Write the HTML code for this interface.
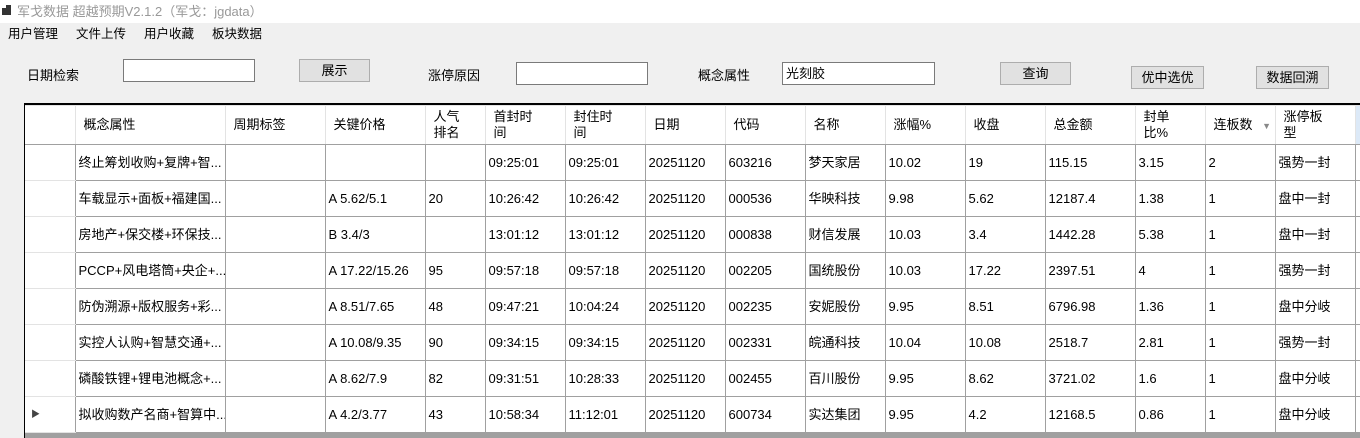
<!DOCTYPE html>
<html><head><meta charset="utf-8"><style>
*{margin:0;padding:0;box-sizing:border-box}
body{width:1360px;height:438px;overflow:hidden;background:#f0f0f0;font-family:"Liberation Sans","Noto Sans CJK SC",sans-serif;font-size:13px;color:#000;position:relative}
.abs{position:absolute}
.title{left:0;top:0;width:1360px;height:23px;background:#fff;color:#999;font-size:13px;line-height:23px;padding-left:17px}
.menu{top:23px;left:0;width:1360px;height:23px;line-height:23px;font-size:12.5px}
.menu span{position:absolute;top:0}
.inp{background:#fff;border:1px solid #7a7a7a;height:23px;line-height:21px;padding-left:3px}
.btn{background:#e1e1e1;border:1px solid #adadad;height:23px;line-height:21px;text-align:center}
.grid{left:24px;top:103px;width:1336px;height:335px;border-left:1px solid #000;border-top:2px solid #000;background:#fff;overflow:hidden}
table{border-collapse:collapse;table-layout:fixed;position:absolute;left:0;top:0;width:1350px}
td{border:1px solid #a0a0a0;height:36px;padding:0 3px;white-space:nowrap;overflow:hidden;vertical-align:middle;line-height:15px}
tr.h td{border-color:#e3e3e3;height:39px;border-bottom:1px solid #a0a0a0;padding-left:8px;line-height:16px}
td.rh{border-left:none;border-top-color:#e3e3e3;border-bottom-color:#e3e3e3;border-right-color:#a0a0a0}
.bot{left:25px;top:433px;width:1335px;height:5px;background:#a0a0a0}
</style></head><body>
<div class="abs title">军戈数据 超越预期V2.1.2（军戈：jgdata）</div>
<div class="abs" style="left:2px;top:8px;width:5px;height:7px;background:#333"></div>
<div class="abs" style="left:6px;top:5px;width:5px;height:10px;background:#333"></div>
<div class="abs menu"><span style="left:8px">用户管理</span><span style="left:76px">文件上传</span><span style="left:144px">用户收藏</span><span style="left:212px">板块数据</span></div>
<div class="abs" style="left:27px;top:65px">日期检索</div>
<div class="abs inp" style="left:123px;top:59px;width:132px"></div>
<div class="abs btn" style="left:299px;top:59px;width:71px">展示</div>
<div class="abs" style="left:428px;top:65px">涨停原因</div>
<div class="abs inp" style="left:516px;top:62px;width:132px"></div>
<div class="abs" style="left:698px;top:65px">概念属性</div>
<div class="abs inp" style="left:782px;top:62px;width:153px">光刻胶</div>
<div class="abs btn" style="left:1000px;top:62px;width:71px">查询</div>
<div class="abs btn" style="left:1131px;top:66px;width:73px">优中选优</div>
<div class="abs btn" style="left:1256px;top:66px;width:73px">数据回溯</div>
<div class="abs grid">
<table>
<colgroup><col style="width:50px"><col style="width:150px"><col style="width:100px"><col style="width:100px"><col style="width:60px"><col style="width:80px"><col style="width:80px"><col style="width:80px"><col style="width:80px"><col style="width:80px"><col style="width:80px"><col style="width:80px"><col style="width:90px"><col style="width:70px"><col style="width:70px"><col style="width:80px"><col style="width:20px"></colgroup>
<tr class="h"><td style="border-left:none"></td><td>概念属性</td><td>周期标签</td><td>关键价格</td><td>人气<br>排名</td><td>首封时<br>间</td><td>封住时<br>间</td><td>日期</td><td>代码</td><td>名称</td><td>涨幅%</td><td>收盘</td><td>总金额</td><td>封单<br>比%</td><td>连板数 <span style="color:#888;font-size:9px;margin-left:6px">▼</span></td><td>涨停板<br>型</td><td style="background:#dce9f7"></td></tr>
<tr><td class="rh"></td><td>终止筹划收购+复牌+智...</td><td></td><td></td><td></td><td>09:25:01</td><td>09:25:01</td><td>20251120</td><td>603216</td><td>梦天家居</td><td>10.02</td><td>19</td><td>115.15</td><td>3.15</td><td>2</td><td>强势一封</td><td></td></tr>
<tr><td class="rh"></td><td>车载显示+面板+福建国...</td><td></td><td>A 5.62/5.1</td><td>20</td><td>10:26:42</td><td>10:26:42</td><td>20251120</td><td>000536</td><td>华映科技</td><td>9.98</td><td>5.62</td><td>12187.4</td><td>1.38</td><td>1</td><td>盘中一封</td><td></td></tr>
<tr><td class="rh"></td><td>房地产+保交楼+环保技...</td><td></td><td>B 3.4/3</td><td></td><td>13:01:12</td><td>13:01:12</td><td>20251120</td><td>000838</td><td>财信发展</td><td>10.03</td><td>3.4</td><td>1442.28</td><td>5.38</td><td>1</td><td>盘中一封</td><td></td></tr>
<tr><td class="rh"></td><td>PCCP+风电塔筒+央企+...</td><td></td><td>A 17.22/15.26</td><td>95</td><td>09:57:18</td><td>09:57:18</td><td>20251120</td><td>002205</td><td>国统股份</td><td>10.03</td><td>17.22</td><td>2397.51</td><td>4</td><td>1</td><td>强势一封</td><td></td></tr>
<tr><td class="rh"></td><td>防伪溯源+版权服务+彩...</td><td></td><td>A 8.51/7.65</td><td>48</td><td>09:47:21</td><td>10:04:24</td><td>20251120</td><td>002235</td><td>安妮股份</td><td>9.95</td><td>8.51</td><td>6796.98</td><td>1.36</td><td>1</td><td>盘中分岐</td><td></td></tr>
<tr><td class="rh"></td><td>实控人认购+智慧交通+...</td><td></td><td>A 10.08/9.35</td><td>90</td><td>09:34:15</td><td>09:34:15</td><td>20251120</td><td>002331</td><td>皖通科技</td><td>10.04</td><td>10.08</td><td>2518.7</td><td>2.81</td><td>1</td><td>强势一封</td><td></td></tr>
<tr><td class="rh"></td><td>磷酸铁锂+锂电池概念+...</td><td></td><td>A 8.62/7.9</td><td>82</td><td>09:31:51</td><td>10:28:33</td><td>20251120</td><td>002455</td><td>百川股份</td><td>9.95</td><td>8.62</td><td>3721.02</td><td>1.6</td><td>1</td><td>盘中分岐</td><td></td></tr>
<tr><td class="rh" style="padding-left:6px;font-size:9px;color:#444">▶</td><td>拟收购数产名商+智算中...</td><td></td><td>A 4.2/3.77</td><td>43</td><td>10:58:34</td><td>11:12:01</td><td>20251120</td><td>600734</td><td>实达集团</td><td>9.95</td><td>4.2</td><td>12168.5</td><td>0.86</td><td>1</td><td>盘中分岐</td><td></td></tr>
</table>
</div>
<div class="abs bot"></div>
</body></html>
